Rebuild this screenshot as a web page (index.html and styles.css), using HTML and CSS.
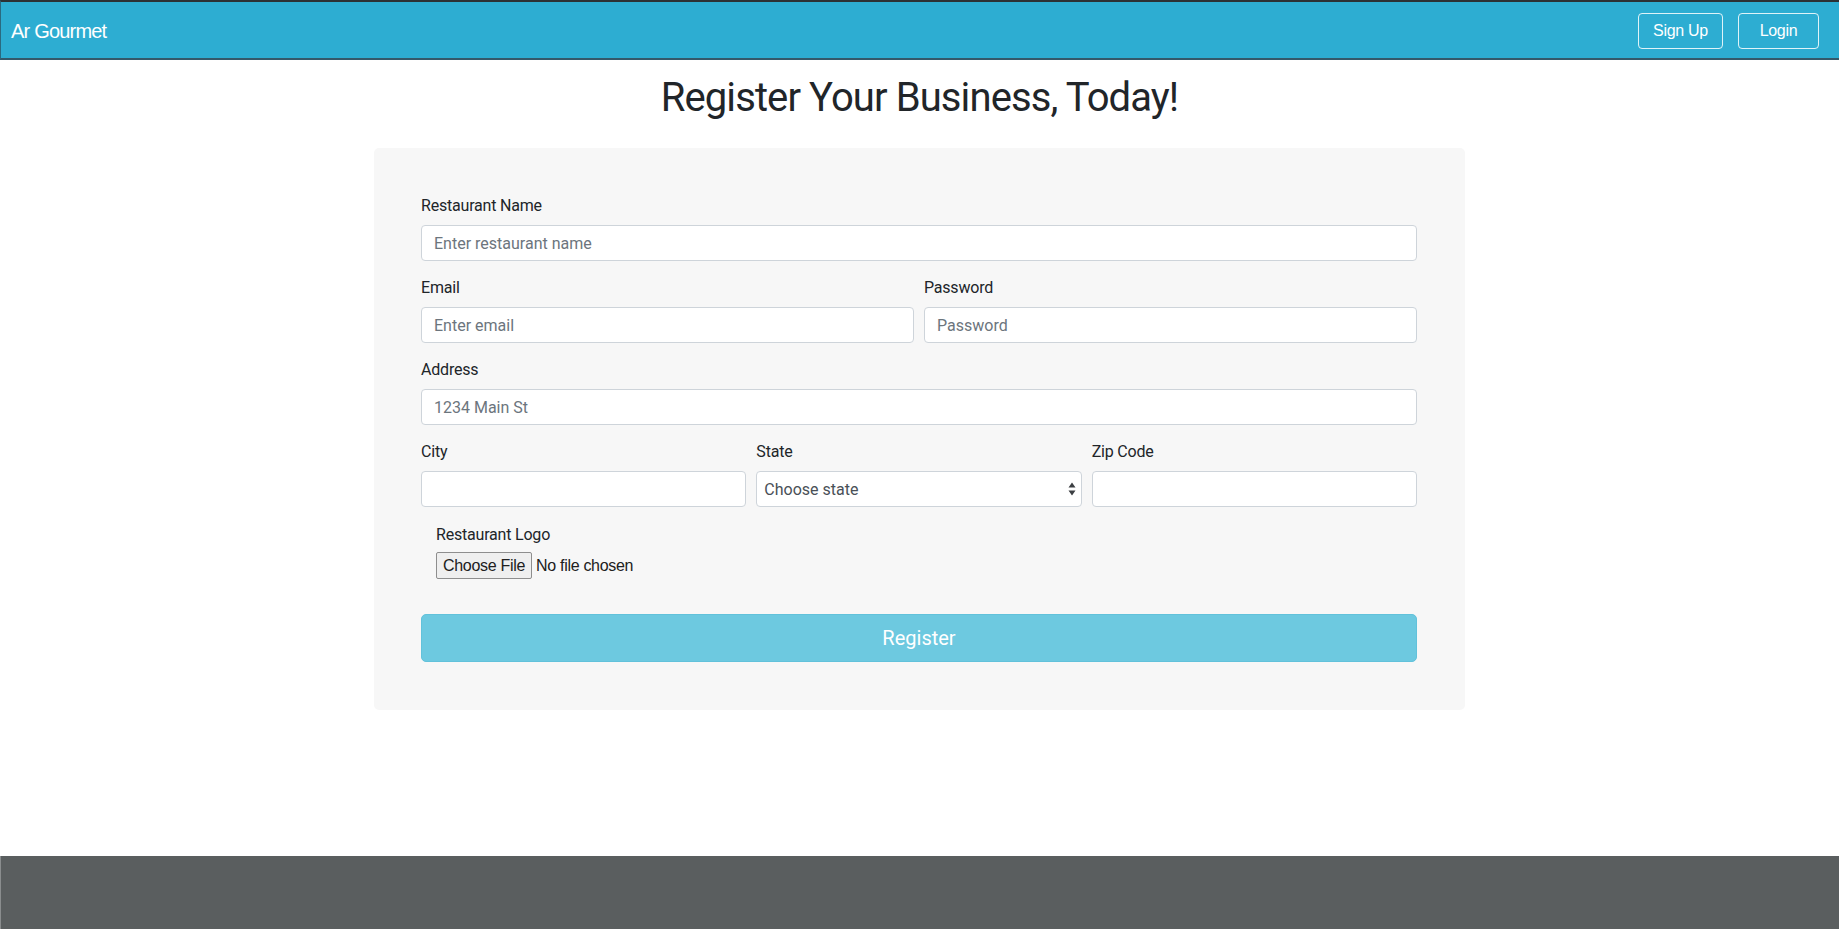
FILE: index.html
```html
<!DOCTYPE html>
<html lang="en">
<head>
<meta charset="utf-8">
<title>Ar Gourmet - Register</title>
<link rel="stylesheet" href="styles.css">
</head>
<body>
<nav class="navbar">
  <a class="brand" href="#">Ar Gourmet</a>
  <div class="nav-actions">
    <button class="nav-btn signup">Sign Up</button>
    <button class="nav-btn login">Login</button>
  </div>
</nav>
<main class="main">
  <h1 class="title">Register Your Business, Today!</h1>
  <form class="card">
    <div class="group">
      <label class="label">Restaurant Name</label>
      <input class="field" type="text" placeholder="Enter restaurant name">
    </div>
    <div class="row two">
      <div class="group">
        <label class="label">Email</label>
        <input class="field" type="email" placeholder="Enter email">
      </div>
      <div class="group">
        <label class="label">Password</label>
        <input class="field" type="password" placeholder="Password">
      </div>
    </div>
    <div class="group">
      <label class="label">Address</label>
      <input class="field" type="text" placeholder="1234 Main St">
    </div>
    <div class="row three">
      <div class="group">
        <label class="label">City</label>
        <input class="field" type="text">
      </div>
      <div class="group">
        <label class="label">State</label>
        <div class="select-wrap">
          <select class="field select">
            <option>Choose state</option>
          </select>
          <svg class="select-arrow" width="8" height="14" viewBox="0 0 8 14"><path d="M4 0.5 L7.5 5.5 L0.5 5.5 Z M4 13.5 L7.5 8.5 L0.5 8.5 Z" fill="#3c3f42"/></svg>
        </div>
      </div>
      <div class="group">
        <label class="label">Zip Code</label>
        <input class="field" type="text">
      </div>
    </div>
    <div class="logo-group">
      <label class="label">Restaurant Logo</label>
      <div class="file-row">
        <span class="file-btn">Choose File</span>
        <span class="file-text">No file chosen</span>
      </div>
    </div>
    <button class="register" type="button">Register</button>
  </form>
</main>
<footer class="footer"></footer>
</body>
</html>
```

FILE: styles.css
```css
* { box-sizing: border-box; }

html, body { height: 100%; }

body {
  margin: 0;
  min-height: 100vh;
  display: flex;
  flex-direction: column;
  font-family: Roboto, "Noto Sans", sans-serif;
  color: #212529;
  background: #ffffff;
}

.navbar {
  display: flex;
  align-items: center;
  justify-content: space-between;
  height: 60px;
  padding: 0 20px 0 10px;
  background: #2dadd2;
  border-top: 2px solid #2c3134;
  border-bottom: 2px solid #34596a;
  border-left: 1px solid #2a6a80;
}

.brand {
  font-family: "Liberation Sans", Arial, sans-serif;
  font-size: 20px;
  letter-spacing: -0.8px;
  color: #ffffff;
  text-decoration: none;
  margin-top: 2px;
}

.nav-actions {
  display: flex;
  gap: 15px;
  margin-top: 2px;
}

.nav-btn {
  height: 36px;
  padding: 0 10px;
  background: transparent;
  color: #ffffff;
  border: 1px solid rgba(255, 255, 255, 0.85);
  border-radius: 4px;
  font-family: "Liberation Sans", Arial, sans-serif;
  font-size: 16px;
  letter-spacing: -0.3px;
}
.signup { width: 85px; }
.login { width: 81px; }

.main {
  flex: 1;
  display: flex;
  flex-direction: column;
  align-items: center;
}

.title {
  margin: 14px 0 26px;
  font-size: 40px;
  line-height: 48px;
  font-weight: 400;
  letter-spacing: -0.9px;
  color: #212529;
}

.card {
  width: 1091px;
  background: #f7f7f7;
  border-radius: 5px;
  padding: 46px 48px 48px 47px;
  display: flex;
  flex-direction: column;
}

.group {
  display: flex;
  flex-direction: column;
  margin-bottom: 15px;
}

.label {
  font-size: 16px;
  line-height: 24px;
  margin-bottom: 7px;
  letter-spacing: -0.2px;
  color: #212529;
}

.field {
  height: 36px;
  width: 100%;
  padding: 0 12px;
  font-family: Roboto, "Noto Sans", sans-serif;
  font-size: 16px;
  color: #495057;
  background: #ffffff;
  border: 1px solid #ced4da;
  border-radius: 4px;
}
.field::placeholder { color: #6c757d; }

.row { display: grid; gap: 10px; }
.row.two { grid-template-columns: 1fr 1fr; }
.row.three { grid-template-columns: 1fr 1fr 1fr; }

.select-wrap { position: relative; }
.select {
  appearance: none;
  -webkit-appearance: none;
  padding-left: 7px;
  color: #495057;
}
.select-arrow {
  position: absolute;
  right: 6px;
  top: 11px;
}

.logo-group {
  display: flex;
  flex-direction: column;
  padding-left: 15px;
  margin-top: 1px;
}
.logo-group .label { margin-bottom: 5px; }

.file-row {
  display: flex;
  align-items: center;
  gap: 4px;
}
.file-btn {
  height: 27px;
  width: 96px;
  display: flex;
  align-items: center;
  justify-content: center;
  background: #efefef;
  border: 1px solid #8e8e8e;
  border-radius: 2px;
  color: #202020;
  font-family: "Liberation Sans", Arial, sans-serif;
  font-size: 16px;
  letter-spacing: -0.3px;
}
.file-text {
  font-family: "Liberation Sans", Arial, sans-serif;
  font-size: 16px;
  letter-spacing: -0.3px;
  color: #202020;
}

.register {
  margin-top: 35px;
  height: 48px;
  width: 100%;
  background: #6dc9e0;
  border: 1px solid #62c2db;
  border-radius: 5px;
  color: #ffffff;
  font-family: Roboto, "Noto Sans", sans-serif;
  font-size: 20px;
}

.footer {
  height: 73px;
  background: #5a5e5f;
  border-left: 1px solid #8a8d8e;
}
```
